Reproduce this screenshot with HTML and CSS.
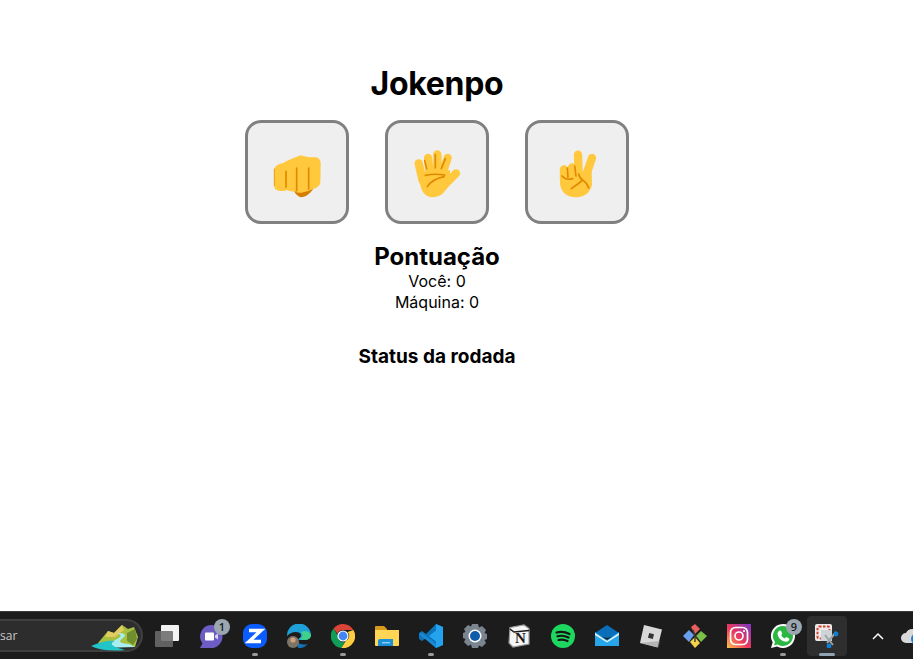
FILE: index.html
```html
<!DOCTYPE html>
<html lang="pt-BR">
<head>
    <meta charset="UTF-8">
    <meta name="viewport" content="width=device-width, initial-scale=1.0">
    <title>Jokenpo</title>
    <link rel="stylesheet" href="styles.css">
</head>
<body>

    <main class="game">
        <h1 class="title">Jokenpo</h1>

        <div class="choices">
            <button class="choice" aria-label="Pedra">
                <svg class="hand" viewBox="21 18 180 180">
                    <path class="skin-dark" d="M100 150Q112 172 124 172Q146 168 160 146Z"/>
                    <path class="skin" d="M42 90Q44 78 58 72Q70 72 78 64Q100 54 122 46Q134 50 150 52L168 52Q182 56 182 70L181 128Q178 142 160 146Q146 154 132 156Q116 162 104 154Q96 156 80 150Q76 154 56 152Q42 150 42 136Z"/>
                    <path class="crease" d="M78 94V142M110 84V152M146 84V148"/>
                    <path class="crease-thin" d="M43 86V138"/>
                </svg>
            </button>
            <button class="choice" aria-label="Papel">
                <svg class="hand" viewBox="21 18 180 180">
                    <path class="finger" d="M56 70L68 122M84 54L90 110M112 43L112 110M143 54L124 110M168 100L128 140"/>
                    <path class="skin" d="M55 95L150 90L150 130Q130 172 100 172Q66 172 60 130Z"/>
                    <path class="crease" d="M74 62L80 86M106 44V84M136 56L124 86M76 106Q104 100 134 105M82 140Q96 118 132 110"/>
                </svg>
            </button>
            <button class="choice" aria-label="Tesoura">
                <svg class="hand" viewBox="21 18 180 180">
                    <path class="finger" d="M114 44L116 112M156 54L136 112M72 88V120M96 82V120"/>
                    <path class="skin" d="M60 100L155 95L156 135Q146 172 106 172Q66 170 60 132Z"/>
                    <path class="crease" d="M82 84L84 112M104 78L108 108M66 108Q78 122 98 116M116 102Q118 114 130 122Q142 130 146 144M94 146Q112 134 128 120"/>
                </svg>
            </button>
        </div>

        <h2 class="score-title">Pontuação</h2>
        <p class="score">Você: 0</p>
        <p class="score">Máquina: 0</p>

        <h3 class="status">Status da rodada</h3>
    </main>

    <footer class="taskbar">
        <div class="search">
            <span class="search-text">sar</span>
            <svg class="search-art" viewBox="0 0 48 30">
                <path fill="#a8c040" d="M7 22L17 10L23 12L31 4L37 8L43 6L47 16L44 26L12 26Z"/>
                <path fill="#e2cc60" d="M17 10L23 12L31 4L33 9L24 16L14 16Z"/>
                <path fill="#6f8f2e" d="M36 12L44 8L46 18L42 24L36 20Z"/>
                <path fill="#a8eef0" d="M26 12Q38 12 32 17Q24 22 38 23L44 26L10 27Q22 20 28 17Q32 14 26 12Z"/>
                <path fill="#22c4c8" d="M0 25Q14 19 24 20Q14 24 34 29Q12 31 0 25Z"/>
            </svg>
        </div>

        <div class="tray-item">
            <svg viewBox="0 0 24 24">
                <rect x="6" y="1" width="18" height="16" rx="1" fill="#f2f2f2"/>
                <rect x="0" y="7" width="18" height="16" rx="1" fill="#6b6b6b" fill-opacity=".88"/>
            </svg>
        </div>
        <div class="tray-item">
            <svg viewBox="0 0 24 24">
                <path fill="#6d5cc4" d="M12 1a11.500 11.500 0 0 1 0 23H1l2.500-4.500A11.500 11.500 0 0 1 12 1z"/>
                <rect x="6" y="8.500" width="9" height="8" rx="1" fill="#fff"/>
                <path fill="#d8d3f2" d="M16 11.500l3-2v6l-3-2z"/>
            </svg>
            <span class="badge">1</span>
        </div>
        <div class="tray-item">
            <svg viewBox="0 0 24 24">
                <rect width="24" height="24" rx="9" fill="#0b5cff"/>
                <path fill="none" stroke="#fff" stroke-width="3.400" d="M6 6.500h12L6 17.500h12"/>
            </svg>
            <span class="dot"></span>
        </div>
        <div class="tray-item">
            <svg viewBox="0 0 24 24">
                <path fill="#1e9fd8" d="M0 12A12 12 0 0 1 24 11Q24 16 17 16L10 16Q16 13 13 9Q6 6 0 12Z"/>
                <path fill="#3fd08a" d="M24 11Q24 16 17 16L12 15Q18 13 14 8Q21 5 24 11Z"/>
                <path fill="#1673b8" d="M10 16Q12 22 21 20Q16 25 11 24Z"/>
                <circle cx="6" cy="18" r="6" fill="#7d7468"/>
                <circle cx="6" cy="16" r="2.600" fill="#d2a27f"/>
            </svg>
        </div>
        <div class="tray-item">
            <svg viewBox="0 0 24 24">
                <path fill="#db4437" d="M12 0a12 12 0 0 1 10.400 6H12a6 6 0 0 0-5.600 3.800L2.600 4.400A12 12 0 0 1 12 0z"/>
                <path fill="#0f9d58" d="M2.600 4.400L7 12a5 5 0 0 0 6.800 5.700L10.400 24A12 12 0 0 1 2.600 4.400z"/>
                <path fill="#ffcd40" d="M22.400 6A12 12 0 0 1 10.400 24L15 16.400A5 5 0 0 0 16.500 8z"/>
                <circle cx="12" cy="12" r="5.600" fill="#fff"/>
                <circle cx="12" cy="12" r="4.400" fill="#4285f4"/>
            </svg>
            <span class="dot"></span>
        </div>
        <div class="tray-item">
            <svg viewBox="0 0 24 24">
                <path fill="#d99a1c" d="M0 3a1 1 0 0 1 1-1h8l3 3v5H0z"/>
                <path fill="#ffd556" d="M0 6h24v15a1 1 0 0 1-1 1H1a1 1 0 0 1-1-1z"/>
                <path fill="#1b8fd8" d="M5 15h13v7H3v-5a2 2 0 0 1 2-2z"/>
                <rect x="7" y="18" width="8" height="1.400" fill="#8cd0f5"/>
            </svg>
        </div>
        <div class="tray-item">
            <svg viewBox="0 0 24 24">
                <path fill="#0e75bb" d="M17 0l7 3v18l-7 3-10-10-4 3-3-2v-6l3-2 4 3z"/>
                <path fill="#23a3ee" d="M17 0l7 3v18l-7 3zM17 6.500L10 12l7 5.500z" fill-rule="evenodd"/>
                <path fill="#1a8ad4" d="M3 9l14 11v4L0 10z"/>
            </svg>
            <span class="dot"></span>
        </div>
        <div class="tray-item">
            <svg viewBox="0 0 24 24">
                <path fill="#7a8590" d="M9 0h6l1 3.500 3-1.500 4 4-1.500 3 2.500 1v5l-2.500 1 1.500 3-4 4-3-1.500L15 24H9l-1-3.500L5 22l-4-4 1.500-3L0 14V9l2.500-1L1 5l4-4 3 1.500z"/>
                <circle cx="12" cy="12" r="6.500" fill="#fff"/>
                <circle cx="12" cy="12" r="5" fill="#0f5cab"/>
            </svg>
        </div>
        <div class="tray-item">
            <svg viewBox="0 0 24 24">
                <path fill="#f5f5f5" stroke="#9a9a9a" stroke-width="1.200" d="M3 3.500L17 1l5 3.500V20L6 23l-4-4z"/>
                <path fill="none" stroke="#1a1a1a" stroke-width="1.500" d="M3 5l4 3 15-1.500"/>
                <text class="notion-n" x="13.500" y="19" text-anchor="middle">N</text>
            </svg>
        </div>
        <div class="tray-item">
            <svg viewBox="0 0 24 24">
                <circle cx="12" cy="12" r="12" fill="#1ed760"/>
                <path fill="none" stroke="#191414" stroke-width="2.200" stroke-linecap="round" d="M5.500 8.500Q12 6.500 18.500 10M6.500 12.300Q12 10.800 17.500 13.500M7.500 16Q12 14.800 16.500 17"/>
            </svg>
        </div>
        <div class="tray-item">
            <svg viewBox="0 0 24 24">
                <path fill="#0a6fb8" d="M12 1L24 9v2L12 14 0 11V9z"/>
                <path fill="#27a5ea" d="M0 8l12 8 12-8v14H0z"/>
                <path fill="#e9f6fd" d="M0 9l12 8 12-8v2L12 18.500 0 11z"/>
            </svg>
        </div>
        <div class="tray-item">
            <svg viewBox="0 0 24 24">
                <path fill="#d8d8d8" d="M5 1l18 4.500-4.500 18L1 19z"/>
                <path fill="#8f8f8f" d="M1 19l18.500 4.500L21 17z" opacity=".5"/>
                <rect x="9.500" y="9.500" width="5" height="5" fill="#333" transform="rotate(14 12 12)"/>
            </svg>
        </div>
        <div class="tray-item">
            <svg viewBox="0 0 24 24">
                <path fill="#e8605c" d="M8 3l4-3 5 5-5 5z"/>
                <path fill="#6a9ff0" d="M0 12l6-6 5 5-5 7z"/>
                <path fill="#7cc048" d="M13 12l5-5 6 5-6 6z"/>
                <path fill="#f5d24b" d="M7 18l5-5 5 6-5 5z"/>
                <path fill="none" stroke="#3a3a3a" stroke-width="1.400" d="M10 6l2 6v6M12 12l3 3"/>
            </svg>
        </div>
        <div class="tray-item">
            <svg viewBox="0 0 24 24">
                <defs>
                    <linearGradient id="insta" x1="0" y1="1" x2="1" y2="0">
                        <stop offset="0" stop-color="#fdc24a"/>
                        <stop offset=".45" stop-color="#ee3a5a"/>
                        <stop offset="1" stop-color="#7a35c8"/>
                    </linearGradient>
                </defs>
                <rect width="24" height="24" fill="url(#insta)"/>
                <rect x="3.500" y="3.500" width="17" height="17" rx="5" fill="none" stroke="#fff" stroke-width="1.700"/>
                <circle cx="12" cy="12" r="4" fill="none" stroke="#fff" stroke-width="1.700"/>
                <circle cx="17" cy="7" r="1.100" fill="#fff"/>
            </svg>
        </div>
        <div class="tray-item">
            <svg viewBox="0 0 24 24">
                <path fill="#fff" d="M12 0a12 12 0 1 1-6 22.400L0 24l1.700-5.800A12 12 0 0 1 12 0z"/>
                <path fill="#2bb741" d="M12 2a10 10 0 1 1-5.300 18.500L3 21.500l1-3.500A10 10 0 0 1 12 2z"/>
                <path fill="#fff" d="M8.500 6.500l1.500 .2 1.200 3-1 1.500q1.200 2.300 3.500 3.300l1.500-1.500 3 1.500v1.500q-1 2-3.300 1.800Q8 17 6.500 10 6.500 7.500 8.500 6.500z"/>
            </svg>
            <span class="badge">9</span>
            <span class="dot"></span>
        </div>
        <div class="tray-item tray-active">
            <svg viewBox="0 0 24 24">
                <rect x="0" y="0" width="17" height="17" rx="2" fill="#ececec"/>
                <rect x="2.500" y="2.500" width="12" height="12" rx="1.500" fill="none" stroke="#d6412f" stroke-width="2" stroke-dasharray="2.500 1.500"/>
                <rect x="6" y="6" width="11" height="11" fill="#cfd3d6"/>
                <path fill="none" stroke="#9aa3aa" stroke-width="2" d="M10 11l8 10M21 8L12 19"/>
                <circle cx="21" cy="10" r="2.400" fill="#0f7fd4"/>
                <circle cx="14" cy="22" r="2.400" fill="#0f7fd4"/>
            </svg>
            <span class="dot dot-wide"></span>
        </div>

        <div class="tray-right">
            <svg class="chevron" viewBox="0 0 12 8">
                <path fill="none" stroke="#fff" stroke-width="1.500" d="M1 7l5-5 5 5"/>
            </svg>
            <svg class="cloud" viewBox="0 0 24 18">
                <path fill="#d8d8d8" d="M6 16a5 5 0 0 1 0-10 7 7 0 0 1 13 1 5 5 0 0 1 1 9z"/>
                <circle cx="17" cy="12" r="6" fill="#1e7fd6"/>
                <circle cx="17" cy="12" r="3" fill="#fff"/>
            </svg>
        </div>
    </footer>

</body>
</html>
```

FILE: styles.css
```css
body {
    margin: 0;
    height: 659px;
    overflow: hidden;
    display: flex;
    flex-direction: column;
    background-color: white;
    color: black;
    font-family: "Inter", "Liberation Sans", sans-serif;
}

.game {
    flex: 1;
    width: 874px;
    text-align: center;
    padding-top: 64px;
    box-sizing: border-box;
}

.title {
    margin: 0;
    font-size: 32px;
    line-height: 40px;
    font-weight: 700;
    letter-spacing: -0.3px;
}

.choices {
    display: flex;
    justify-content: center;
    gap: 36px;
    margin-top: 16px;
}

.choice {
    width: 104px;
    height: 104px;
    padding: 0;
    display: flex;
    align-items: center;
    justify-content: center;
    background-color: #efefef;
    border: 3px solid #808080;
    border-radius: 16px;
}

.hand {
    width: 60px;
    height: 60px;
    margin-top: 8px;
}

.skin {
    fill: #ffc83d;
}

.skin-dark {
    fill: #d67d00;
}

.finger {
    fill: none;
    stroke: #ffc83d;
    stroke-width: 25;
    stroke-linecap: round;
}

.crease {
    fill: none;
    stroke: #e08a00;
    stroke-width: 5;
    stroke-linecap: round;
}

.crease-thin {
    fill: none;
    stroke: #e8a21a;
    stroke-width: 3;
}

.score-title {
    margin: 18px 0 0;
    font-size: 24px;
    line-height: 29px;
    font-weight: 700;
}

.score {
    margin: 0;
    font-size: 16px;
    line-height: 21px;
}

.status {
    margin: 32px 0 0;
    font-size: 19px;
    line-height: 23px;
    font-weight: 700;
}

.taskbar {
    flex: none;
    height: 48px;
    box-sizing: border-box;
    display: flex;
    align-items: center;
    background-color: #1c1c1c;
    border-top: 1px solid #3a3a3a;
    font-family: "Open Sans", sans-serif;
}

.search {
    flex: none;
    box-sizing: border-box;
    width: 143px;
    height: 33px;
    margin-right: 2px;
    padding: 0 2px 0 0;
    display: flex;
    align-items: center;
    justify-content: space-between;
    background-color: #2d2d2d;
    border: 2px solid #404040;
    border-left: none;
    border-radius: 0 17px 17px 0;
}

.search-text {
    font-size: 12px;
    color: #c8c8c8;
}

.search-art {
    width: 48px;
    height: 30px;
}

.tray-item {
    flex: none;
    position: relative;
    width: 44px;
    height: 40px;
    display: flex;
    align-items: center;
    justify-content: center;
}

.tray-item svg {
    width: 24px;
    height: 24px;
}

.tray-active {
    width: 40px;
    margin: 0 2px;
    background-color: #2e2e2e;
    border-radius: 4px;
}

.badge {
    position: absolute;
    top: 3px;
    left: 25px;
    width: 16px;
    height: 16px;
    border-radius: 50%;
    background-color: #9aa6b0;
    color: #1c1c1c;
    font-size: 11px;
    font-weight: 600;
    line-height: 16px;
    text-align: center;
}

.dot {
    position: absolute;
    bottom: 0;
    left: 19px;
    width: 6px;
    height: 3px;
    border-radius: 2px;
    background-color: #9a9a9a;
}

.dot-wide {
    left: 12px;
    width: 16px;
    background-color: #8fa3b3;
}

.notion-n {
    font-family: "Liberation Serif", serif;
    font-size: 15px;
    font-weight: 700;
    fill: #1a1a1a;
}

.tray-right {
    flex: 1;
    display: flex;
    align-items: center;
    padding-left: 23px;
    gap: 16px;
}

.chevron {
    flex: none;
    width: 12px;
    height: 8px;
}

.cloud {
    flex: none;
    width: 24px;
    height: 18px;
}
```
